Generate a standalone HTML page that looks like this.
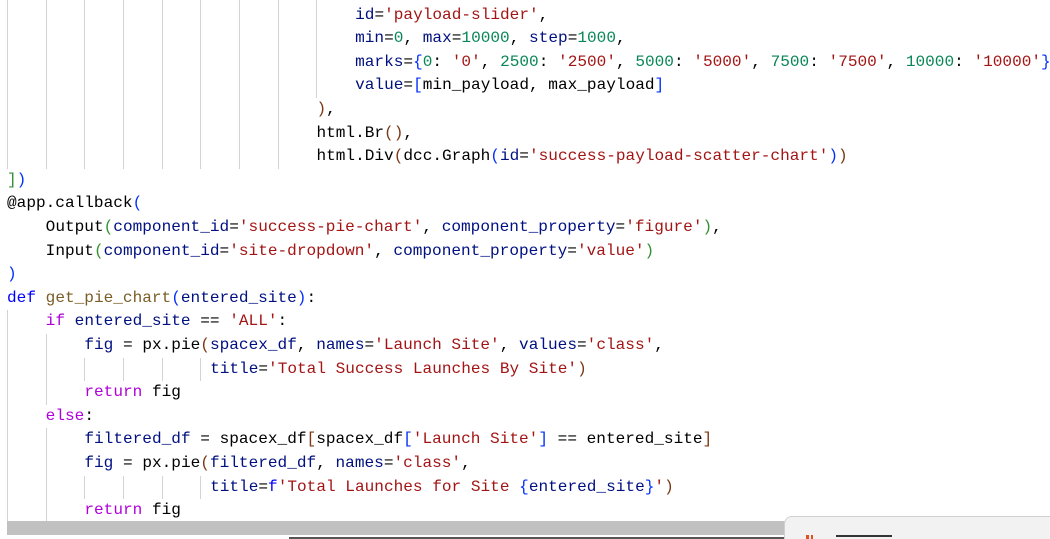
<!DOCTYPE html>
<html><head><meta charset="utf-8"><style>
html,body{margin:0;padding:0;background:#fff;width:1050px;height:539px;overflow:hidden;position:relative}
.l{position:absolute;left:0;height:23.6px;line-height:23.6px;font-family:"Liberation Mono",monospace;font-size:16.1px;white-space:pre;color:#000}
.g{position:absolute;width:1px;background:#d3d3d3}
.k{color:#0000ff}.c{color:#af00db}.f{color:#795e26}.v{color:#001080}.s{color:#a31515}.n{color:#098658}
.b1{color:#0431fa}.b2{color:#319331}.b3{color:#7b3814}
</style></head><body>
<div id="guides"></div>
<div id="code"></div>
<div style="position:absolute;left:7px;top:521px;width:780px;height:14px;background:#c1c1c1"></div>
<div style="position:absolute;left:289px;top:537px;width:500px;height:2px;background:#555"></div>
<div style="position:absolute;left:784px;top:516px;width:280px;height:40px;background:#f2f2f2;border:1px solid #d0d0d0;border-radius:8px 0 0 0"></div>
<div style="position:absolute;left:806px;top:535px;width:3px;height:4px;background:#e2501c"></div>
<div style="position:absolute;left:811px;top:535px;width:2px;height:4px;background:#e2501c"></div>
<div style="position:absolute;left:836px;top:535px;width:56px;height:2px;background:#333"></div>
<script>
const cw=9.67,x0=7,top0=3.5,lh=23.6;
const L=[
[36,"<span class=v>id</span>=<span class=s>'payload-slider'</span>,"],
[36,"<span class=v>min</span>=<span class=n>0</span>, <span class=v>max</span>=<span class=n>10000</span>, <span class=v>step</span>=<span class=n>1000</span>,"],
[36,"<span class=v>marks</span>=<span class=b1>{</span><span class=n>0</span>: <span class=s>'0'</span>, <span class=n>2500</span>: <span class=s>'2500'</span>, <span class=n>5000</span>: <span class=s>'5000'</span>, <span class=n>7500</span>: <span class=s>'7500'</span>, <span class=n>10000</span>: <span class=s>'10000'</span><span class=b1>}</span>,"],
[36,"<span class=v>value</span>=<span class=b1>[</span>min_payload, max_payload<span class=b1>]</span>"],
[32,"<span class=b3>)</span>,"],
[32,"html.Br<span class=b3>()</span>,"],
[32,"html.Div<span class=b3>(</span>dcc.Graph<span class=b1>(</span><span class=v>id</span>=<span class=s>'success-payload-scatter-chart'</span><span class=b1>)</span><span class=b3>)</span>"],
[0,"<span class=b2>]</span><span class=b1>)</span>"],
[0,"@app.callback<span class=b1>(</span>"],
[4,"Output<span class=b2>(</span><span class=v>component_id</span>=<span class=s>'success-pie-chart'</span>, <span class=v>component_property</span>=<span class=s>'figure'</span><span class=b2>)</span>,"],
[4,"Input<span class=b2>(</span><span class=v>component_id</span>=<span class=s>'site-dropdown'</span>, <span class=v>component_property</span>=<span class=s>'value'</span><span class=b2>)</span>"],
[0,"<span class=b1>)</span>"],
[0,"<span class=k>def</span> <span class=f>get_pie_chart</span><span class=b1>(</span><span class=v>entered_site</span><span class=b1>)</span>:"],
[4,"<span class=c>if</span> <span class=v>entered_site</span> == <span class=s>'ALL'</span>:"],
[8,"<span class=v>fig</span> = px.pie<span class=b3>(</span><span class=v>spacex_df</span>, <span class=v>names</span>=<span class=s>'Launch Site'</span>, <span class=v>values</span>=<span class=s>'class'</span>,"],
[21,"<span class=v>title</span>=<span class=s>'Total Success Launches By Site'</span><span class=b3>)</span>"],
[8,"<span class=c>return</span> fig"],
[4,"<span class=c>else</span>:"],
[8,"<span class=v>filtered_df</span> = spacex_df<span class=b3>[</span>spacex_df<span class=b1>[</span><span class=s>'Launch Site'</span><span class=b1>]</span> == entered_site<span class=b3>]</span>"],
[8,"<span class=v>fig</span> = px.pie<span class=b3>(</span><span class=v>filtered_df</span>, <span class=v>names</span>=<span class=s>'class'</span>,"],
[21,"<span class=v>title</span>=<span class=k>f</span><span class=s>'Total Launches for Site </span><span class=b1>{</span><span class=v>entered_site</span><span class=b1>}</span><span class=s>'</span><span class=b3>)</span>"],
[8,"<span class=c>return</span> fig"]];
let h="";
L.forEach((l,i)=>{h+=`<div class=l style="top:${top0+i*lh}px;left:${x0+l[0]*cw}px">${l[1]}</div>`});
h+=`<div class=l style="top:${top0-lh}px;left:${x0+7.6*cw}px;color:#7b3814">()),</div>`;
document.getElementById('code').innerHTML=h;
let g="";
function G(col,a,b){g+=`<div class=g style="left:${Math.round(x0+col*cw)}px;top:${top0+a*lh}px;height:${(b-a+1)*lh}px"></div>`}
for(let c=0;c<=32;c+=4)G(c,-1,3);
for(let c=0;c<=28;c+=4)G(c,4,6);
G(0,13,21);G(4,14,16);G(4,18,21);
[8,12,16,20].forEach(c=>{G(c,15,15);G(c,20,20)});
document.getElementById('guides').innerHTML=g;
</script>
</body></html>
